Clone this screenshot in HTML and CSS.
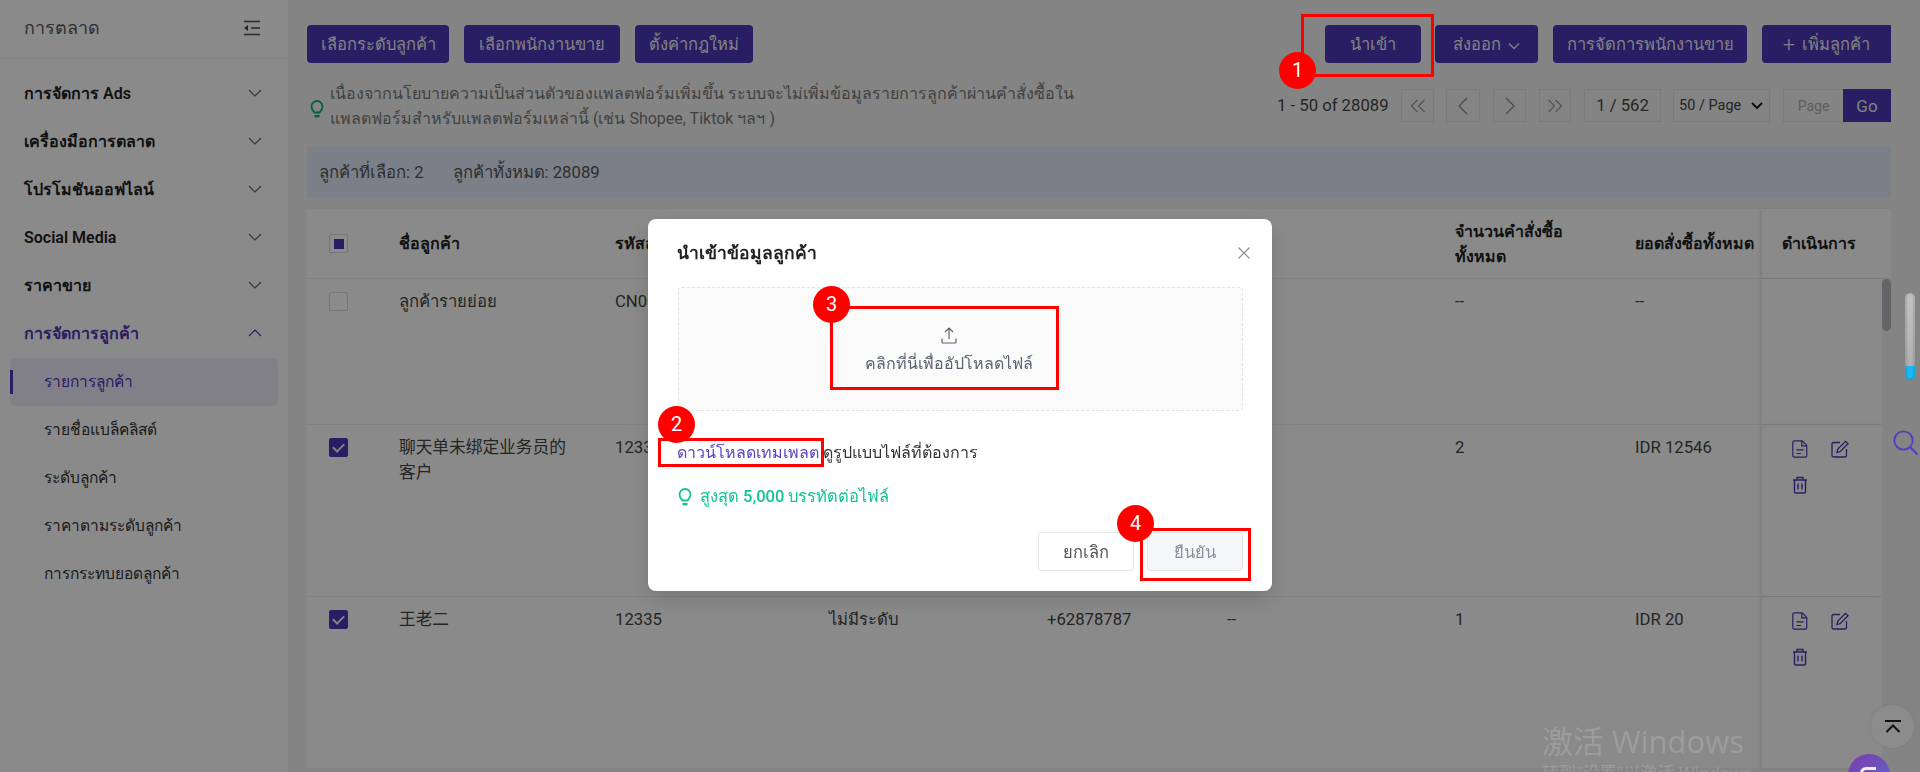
FILE: index.html
```html
<!DOCTYPE html>
<html lang="th">

<head>
  <meta charset="UTF-8" />
  <meta name="viewport" content="width=device-width, initial-scale=1.0" />
  <title>รายการลูกค้า</title>
  <link rel="stylesheet" href="styles.css">
</head>

<body>

  <svg class="sprites" width="0" height="0">
    <symbol id="down" viewBox="0 0 14 8"><path d="M1 1l6 6 6-6" fill="none" stroke="currentColor" stroke-width="1.1" /></symbol>
    <symbol id="up" viewBox="0 0 14 8"><path d="M1 7l6-6 6 6" fill="none" stroke="currentColor" stroke-width="1.1" /></symbol>
    <symbol id="bulb" viewBox="0 0 14 20"><path d="M4.500 13.500C3 12 1.500 10.500 1.500 7.500a5.500 5.500 0 0 1 11 0c0 3-1.500 4.500-3 6z" fill="none" stroke="currentColor" stroke-width="1.800" /><path d="M4.500 16h5v1.500l-1 1h-3l-1-1z" fill="currentColor" /></symbol>
    <symbol id="doc" viewBox="0 0 18 20"><path d="M2.500 1h9l5 5v11.500a1.500 1.500 0 0 1-1.500 1.500H2.500A1.500 1.500 0 0 1 1 17.500v-15A1.500 1.500 0 0 1 2.500 1zM11 1v5.500h5.500M5 11h8M5 15h5" fill="none" stroke="currentColor" stroke-width="1.300" /></symbol>
    <symbol id="edit" viewBox="0 0 18 18"><path d="M9 2.500H2.500A1.500 1.500 0 0 0 1 4v11.500A1.500 1.500 0 0 0 2.500 17H14a1.500 1.500 0 0 0 1.500-1.500V9M6 12.500l.8-3.500L14.500 1.300l2.500 2.500-7.700 7.700z" fill="none" stroke="currentColor" stroke-width="1.300" /></symbol>
    <symbol id="trash" viewBox="0 0 16 18"><path d="M1 4h14M5 4V1.500h6V4M2.500 4v11.500A1.500 1.500 0 0 0 4 17h8a1.500 1.500 0 0 0 1.500-1.500V4M6 7.500v6M10 7.500v6" fill="none" stroke="currentColor" stroke-width="1.400" /></symbol>
  </svg>

  <aside class="sidebar">
    <div class="side-head">
      <span class="side-title">การตลาด</span>
      <svg class="side-toggle" width="18" height="16" viewBox="0 0 18 16">
        <path d="M1 1.500h16M8 8h9M1 14.500h16" fill="none" stroke="#4a4a4a" stroke-width="1.500" />
        <path d="M5 5v6L1 8z" fill="#4a4a4a" />
      </svg>
    </div>
    <nav class="menu">
      <div class="menu-item">การจัดการ Ads <svg class="chev"><use href="#down" /></svg></div>
      <div class="menu-item">เครื่องมือการตลาด <svg class="chev"><use href="#down" /></svg></div>
      <div class="menu-item">โปรโมชันออฟไลน์ <svg class="chev"><use href="#down" /></svg></div>
      <div class="menu-item">Social Media <svg class="chev"><use href="#down" /></svg></div>
      <div class="menu-item">ราคาขาย <svg class="chev"><use href="#down" /></svg></div>
      <div class="menu-item open">การจัดการลูกค้า <svg class="chev"><use href="#up" /></svg></div>
      <div class="sub-item active">รายการลูกค้า</div>
      <div class="sub-item">รายชื่อแบล็คลิสต์</div>
      <div class="sub-item">ระดับลูกค้า</div>
      <div class="sub-item">ราคาตามระดับลูกค้า</div>
      <div class="sub-item">การกระทบยอดลูกค้า</div>
    </nav>
  </aside>

  <main class="main">
    <div class="toolbar">
      <div class="btn-group">
        <button class="btn w-level">เลือกระดับลูกค้า</button>
        <button class="btn w-sales">เลือกพนักงานขาย</button>
        <button class="btn w-rule">ตั้งค่ากฎใหม่</button>
      </div>
      <div class="btn-group">
        <button class="btn w-import">นำเข้า</button>
        <button class="btn w-export">ส่งออก <svg class="btn-chev" viewBox="0 0 12 8"><path d="M1 1.500l5 5 5-5" fill="none" stroke="currentColor" stroke-width="1.400" /></svg></button>
        <button class="btn w-staff">การจัดการพนักงานขาย</button>
        <button class="btn w-add"><span class="plus">+</span> เพิ่มลูกค้า</button>
      </div>
    </div>

    <div class="info-row">
      <div class="note">
        <svg class="note-bulb"><use href="#bulb" /></svg>
        <p>เนื่องจากนโยบายความเป็นส่วนตัวของแพลตฟอร์มเพิ่มขึ้น ระบบจะไม่เพิ่มข้อมูลรายการลูกค้าผ่านคำสั่งซื้อใน<br>แพลตฟอร์มสำหรับแพลตฟอร์มเหล่านี้ (เช่น Shopee, Tiktok ฯลฯ )</p>
      </div>
      <div class="pager">
        <span class="pager-total">1 - 50 of 28089</span>
        <span class="page-btn first"><svg width="16" height="14" viewBox="0 0 16 14"><path d="M7.500 1l-6 6 6 6M14.500 1l-6 6 6 6" fill="none" stroke="currentColor" stroke-width="1.300" /></svg></span>
        <span class="page-btn prev"><svg width="10" height="18" viewBox="0 0 10 18"><path d="M9 1L1 9l8 8" fill="none" stroke="currentColor" stroke-width="1.300" /></svg></span>
        <span class="page-btn next"><svg width="10" height="18" viewBox="0 0 10 18"><path d="M1 1l8 8-8 8" fill="none" stroke="currentColor" stroke-width="1.300" /></svg></span>
        <span class="page-btn last"><svg width="16" height="14" viewBox="0 0 16 14"><path d="M1.500 1l6 6-6 6M8.500 1l6 6-6 6" fill="none" stroke="currentColor" stroke-width="1.300" /></svg></span>
        <span class="page-now">1 / 562</span>
        <span class="page-size">50 / Page <svg width="12" height="8" viewBox="0 0 12 8"><path d="M1 1l5 5 5-5" fill="none" stroke="#111" stroke-width="1.800" /></svg></span>
        <span class="page-input">Page</span>
        <span class="page-go">Go</span>
      </div>
    </div>

    <div class="count-bar">
      <span>ลูกค้าที่เลือก: 2</span>
      <span>ลูกค้าทั้งหมด: 28089</span>
    </div>

    <div class="table">
      <div class="row head">
        <div class="cell"><span class="check part"></span></div>
        <div class="cell">ชื่อลูกค้า</div>
        <div class="cell">รหัสลูกค้า</div>
        <div class="cell">ระดับลูกค้า</div>
        <div class="cell">เบอร์โทรศัพท์</div>
        <div class="cell">อีเมล</div>
        <div class="cell">จำนวนคำสั่งซื้อ<br>ทั้งหมด</div>
        <div class="cell">ยอดสั่งซื้อทั้งหมด</div>
        <div class="cell fixed">ดำเนินการ</div>
      </div>
      <div class="table-body">
        <div class="rows">
          <div class="row first-row">
            <div class="cell"><span class="check"></span></div>
            <div class="cell">ลูกค้ารายย่อย</div>
            <div class="cell">CN0001</div>
            <div class="cell">ไม่มีระดับ</div>
            <div class="cell">--</div>
            <div class="cell">--</div>
            <div class="cell">--</div>
            <div class="cell">--</div>
            <div class="cell fixed"></div>
          </div>
          <div class="row">
            <div class="cell"><span class="check on"></span></div>
            <div class="cell">聊天单未绑定业务员的<br>客户</div>
            <div class="cell">12334</div>
            <div class="cell">ไม่มีระดับ</div>
            <div class="cell">--</div>
            <div class="cell">--</div>
            <div class="cell">2</div>
            <div class="cell">IDR 12546</div>
            <div class="cell fixed">
              <div class="actions">
                <svg class="act"><use href="#doc" /></svg>
                <svg class="act"><use href="#edit" /></svg>
                <svg class="act"><use href="#trash" /></svg>
              </div>
            </div>
          </div>
          <div class="row">
            <div class="cell"><span class="check on"></span></div>
            <div class="cell">王老二</div>
            <div class="cell">12335</div>
            <div class="cell">ไม่มีระดับ</div>
            <div class="cell">+62878787</div>
            <div class="cell">--</div>
            <div class="cell">1</div>
            <div class="cell">IDR 20</div>
            <div class="cell fixed">
              <div class="actions">
                <svg class="act"><use href="#doc" /></svg>
                <svg class="act"><use href="#edit" /></svg>
                <svg class="act"><use href="#trash" /></svg>
              </div>
            </div>
          </div>
        </div>
        <div class="scroll-track"><div class="scroll-thumb"></div></div>
      </div>
    </div>
  </main>

  <div class="to-top">
    <svg width="16" height="13" viewBox="0 0 16 13"><path d="M0 1h16M1.500 12L8 5.500l6.500 6.500" fill="none" stroke="#222" stroke-width="2" /></svg>
  </div>

  <div class="overlay">
    <div class="modal">
      <div class="modal-head">
        <h2>นำเข้าข้อมูลลูกค้า</h2>
        <svg width="12" height="12" viewBox="0 0 12 12"><path d="M.5.500l11 11M11.500.500l-11 11" stroke="#8a8f99" stroke-width="1.200" /></svg>
      </div>
      <div class="upload">
        <svg width="16" height="17" viewBox="0 0 16 17"><path d="M8 12V1.500M4 5l4-4 4 4M1 11.500V15a1 1 0 0 0 1 1h12a1 1 0 0 0 1-1v-3.500" fill="none" stroke="#5c6370" stroke-width="1.200" /></svg>
        <span>คลิกที่นี่เพื่ออัปโหลดไฟล์</span>
      </div>
      <p class="template"><a>ดาวน์โหลดเทมเพลต</a> ดูรูปแบบไฟล์ที่ต้องการ</p>
      <p class="limit"><svg class="limit-bulb"><use href="#bulb" /></svg>สูงสุด 5,000 บรรทัดต่อไฟล์</p>
      <div class="modal-foot">
        <button class="btn-cancel">ยกเลิก</button>
        <button class="btn-ok">ยืนยัน</button>
      </div>
    </div>
  </div>

  <!-- ของลอยด้านขวา -->
  <div class="slider"></div>
  <svg class="float-search" width="26" height="26" viewBox="0 0 26 26">
    <circle cx="10.500" cy="10.500" r="9.200" fill="none" stroke="#523cc4" stroke-width="1.800" />
    <path d="M17.500 17.500l7 7" stroke="#523cc4" stroke-width="1.800" />
  </svg>
  <div class="chat"><span class="chat-c"></span></div>

  <!-- กรอบแดงและหมายเลขขั้นตอน -->
  <div class="mark-box box-1"></div>
  <div class="mark-box box-2"></div>
  <div class="mark-box box-3"></div>
  <div class="mark-box box-4"></div>
  <div class="mark-num num-1">1</div>
  <div class="mark-num num-2">2</div>
  <div class="mark-num num-3">3</div>
  <div class="mark-num num-4">4</div>

  <div class="watermark">
    <div class="wm-big">激活 Windows</div>
    <div class="wm-small">转到"设置"以激活 Windows。</div>
  </div>

</body>

</html>
```

FILE: styles.css
```css
* {
  box-sizing: border-box;
}

html,
body {
  height: 772px;
  overflow: hidden;
}

body {
  margin: 0;
  display: flex;
  position: relative;
  font-family: Roboto, Inter, "Noto Sans", "Noto Sans CJK SC", sans-serif;
  font-size: 16.7px;
  color: #333;
  background: #f1f1f1;
}

.sprites {
  position: absolute;
}

button {
  font-family: inherit;
  border: none;
}

/* sidebar */
.sidebar {
  width: 288px;
  flex: none;
  background: #fbfbfb;
}

.side-head {
  height: 57px;
  padding: 0 27px 2px 24px;
  display: flex;
  align-items: center;
  justify-content: space-between;
  box-shadow: 0 1px 2px rgba(0, 0, 0, 0.06);
}

.side-title {
  font-size: 18px;
  color: #555;
}

.menu {
  padding-top: 13px;
}

.menu-item {
  height: 48px;
  padding: 0 26px 2px 24px;
  display: flex;
  align-items: center;
  justify-content: space-between;
  font-size: 16px;
  font-weight: 600;
  color: #222;
}

.menu-item.open {
  color: #4c35b4;
}

.chev {
  width: 14px;
  height: 8px;
  color: #666;
}

.open .chev {
  color: #4c35b4;
}

.sub-item {
  height: 48px;
  margin: 0 10px;
  padding: 0 0 2px 34px;
  display: flex;
  align-items: center;
  position: relative;
  font-size: 15.5px;
  color: #333;
}

.sub-item.active {
  background: #ece9f8;
  border-radius: 6px;
  color: #4c35b4;
}

.sub-item.active::before {
  content: "";
  position: absolute;
  left: 0;
  top: 12px;
  width: 3px;
  height: 24px;
  background: #4c35b4;
}

/* main */
.main {
  flex: 1;
  padding: 25px 29px 0 19px;
}

.toolbar {
  display: flex;
  justify-content: space-between;
}

.btn-group {
  display: flex;
  gap: 15px;
}

.btn {
  height: 38px;
  padding: 0;
  background: #4c35b4;
  color: #ededed;
  border-radius: 4px;
  font-size: 16.5px;
}

.w-level {
  width: 142px;
}

.w-sales {
  width: 156px;
}

.w-rule {
  width: 118px;
}

.w-import {
  width: 96px;
}

.w-export {
  width: 103px;
  margin-left: -1px;
}

.w-staff {
  width: 194px;
}

.w-add {
  width: 129px;
  border-radius: 4px 0 0 4px;
}

.plus {
  font-size: 21px;
  font-weight: 300;
  line-height: 1;
  margin-right: 3px;
  vertical-align: -1px;
}

.btn-chev {
  width: 12px;
  height: 8px;
  margin-left: 3px;
}

.info-row {
  margin-top: 18px;
  height: 50px;
  display: flex;
  justify-content: space-between;
}

.note {
  display: flex;
  align-items: center;
  gap: 6px;
  padding-left: 3px;
  font-size: 16px;
  line-height: 25px;
  color: #777;
}

.note p {
  margin: 0;
}

.note-bulb {
  width: 14px;
  height: 20px;
  margin-top: 6px;
  color: #0fa77f;
}

.pager {
  height: 33px;
  margin-top: 8px;
  display: flex;
  align-items: center;
  color: #444;
}

.pager-total {
  width: 124px;
}

.page-btn {
  height: 33px;
  display: flex;
  align-items: center;
  justify-content: center;
  border: 1px solid #dedede;
  color: #999;
}

.first {
  width: 33px;
}

.prev {
  width: 34px;
  margin-left: 12px;
  color: #888;
}

.next {
  width: 33px;
  margin-left: 13px;
  color: #888;
}

.last {
  width: 32px;
  margin-left: 13px;
}

.page-now {
  width: 77px;
  height: 33px;
  margin-left: 13px;
  display: flex;
  align-items: center;
  justify-content: center;
  border: 1px solid #dedede;
}

.page-size {
  width: 97px;
  height: 33px;
  margin-left: 12px;
  padding: 0 6px 0 5px;
  display: flex;
  align-items: center;
  justify-content: space-between;
  border: 1px solid #dedede;
  font-size: 14.5px;
}

.page-input {
  width: 60px;
  height: 33px;
  margin-left: 13px;
  display: flex;
  align-items: center;
  justify-content: center;
  border: 1px solid #dedede;
  border-right: none;
  font-size: 14px;
  color: #aaa;
}

.page-go {
  width: 48px;
  height: 33px;
  display: flex;
  align-items: center;
  justify-content: center;
  background: #4c35b4;
  color: #ededed;
  font-size: 17px;
}

.count-bar {
  margin-top: 16px;
  height: 50px;
  padding-left: 12px;
  display: flex;
  align-items: center;
  gap: 29px;
  background: #e1e8f6;
  color: #555;
}

/* table */
.table {
  margin-top: 12px;
}

.row {
  display: grid;
  grid-template-columns: 92px 216px 214px 218px 180px 228px 180px 127px 120px;
  height: 172px;
  background: #fbfbfb;
  border-top: 1px solid #ececec;
  line-height: 25px;
  color: #444;
}

.first-row {
  height: 145px;
  border-top: none;
}

.head {
  height: 70px;
  border-top: none;
  border-bottom: 1px solid #ececec;
  grid-template-columns: 92px 216px 214px 218px 180px 228px 180px 127px 129px;
  font-size: 16px;
  font-weight: 600;
  color: #222;
}

.head .cell {
  padding-top: 0;
  display: flex;
  align-items: center;
}

.cell {
  padding: 10px 0 0 0;
  white-space: nowrap;
}

.cell:first-child {
  padding: 13px 0 0 22px;
}

.head .cell:first-child {
  padding: 0 0 0 22px;
}

.fixed {
  box-shadow: -2px 0 3px rgba(0, 0, 0, 0.1);
  padding-left: 20px;
}

.head .fixed {
  padding-left: 20px;
}

.check {
  display: flex;
  align-items: center;
  justify-content: center;
  width: 19px;
  height: 19px;
  border: 1px solid #d8d8d8;
  border-radius: 2px;
  background: #fdfdfd;
}

.check.part::after {
  content: "";
  width: 10px;
  height: 10px;
  background: #4c35b4;
}

.check.on {
  background: #4c35b4;
  border-color: #4c35b4;
}

.check.on::after {
  content: "";
  width: 9px;
  height: 5px;
  margin-top: -3px;
  border-left: 2px solid #eee;
  border-bottom: 2px solid #eee;
  transform: rotate(-45deg);
}

.actions {
  display: grid;
  grid-template-columns: 40px 40px;
  grid-auto-rows: 36px;
  margin: 5px 0 0 9px;
  color: #4c35b4;
}

.act {
  width: 18px;
  height: 18px;
}

.table-body {
  display: flex;
}

.rows {
  width: 1575px;
}

.scroll-track {
  width: 9px;
}

.scroll-thumb {
  width: 9px;
  height: 52px;
  border-radius: 5px;
  background: #b4b8c0;
}

/* floating */
.to-top {
  position: absolute;
  left: 1871px;
  top: 705px;
  width: 43px;
  height: 43px;
  border-radius: 50%;
  background: #fff;
  display: flex;
  align-items: center;
  justify-content: center;
  box-shadow: 0 0 4px rgba(0, 0, 0, 0.08);
}

.slider {
  position: absolute;
  z-index: 15;
  left: 1905px;
  top: 293px;
  width: 10px;
  height: 87px;
  border-radius: 5px;
  background: linear-gradient(#c4c4c4 0, #b0b0b0 84%, #1ab9f5 84%);
  box-shadow: inset 2px 0 2px rgba(0, 0, 0, 0.12), inset -2px 0 2px rgba(0, 0, 0, 0.12);
}

.float-search {
  position: absolute;
  z-index: 15;
  left: 1893px;
  top: 430px;
}

.chat {
  position: absolute;
  z-index: 15;
  left: 1848px;
  top: 754px;
  width: 42px;
  height: 42px;
  border-radius: 50%;
  background: linear-gradient(135deg, #7c3aad, #5b6ccb);
}

.chat-c {
  position: absolute;
  left: 12px;
  top: 13px;
  width: 16px;
  height: 16px;
  border: 3px solid #eee;
  border-right: none;
  border-radius: 6px 0 0 6px;
}

/* modal */
.overlay {
  position: fixed;
  inset: 0;
  z-index: 10;
  padding-top: 219px;
  display: flex;
  justify-content: center;
  align-items: flex-start;
  background: rgba(0, 0, 0, 0.45);
}

.modal {
  width: 624px;
  height: 372px;
  padding: 0 29px 0 29px;
  background: #fff;
  border-radius: 8px;
  box-shadow: 0 8px 24px rgba(0, 0, 0, 0.15);
}

.modal-head {
  height: 68px;
  margin-right: -7px;
  display: flex;
  align-items: center;
  justify-content: space-between;
}

.modal-head h2 {
  margin: 0;
  font-size: 17.500px;
  font-weight: 600;
  color: #222;
}

.upload {
  height: 124px;
  margin-left: 1px;
  display: flex;
  flex-direction: column;
  align-items: center;
  padding: 39px 24px 0 0;
  gap: 7px;
  background: #fafafa;
  border: 1px dashed #e4e4e4;
  border-radius: 4px;
  font-size: 16px;
  color: #5c6370;
}

.template {
  margin: 29px 0 0;
  line-height: 25px;
  font-size: 16px;
  color: #333;
}

.template a {
  color: #5a43c8;
}

.limit {
  margin: 19px 0 0 1px;
  display: flex;
  align-items: center;
  gap: 8px;
  line-height: 25px;
  font-size: 16.5px;
  font-weight: 500;
  color: #12c493;
}

.limit-bulb {
  width: 14px;
  height: 20px;
}

.modal-foot {
  margin-top: 23px;
  display: flex;
  justify-content: flex-end;
  gap: 13px;
}

.btn-cancel,
.btn-ok {
  width: 96px;
  height: 39px;
  border-radius: 3px;
  font-size: 16.500px;
}

.btn-cancel {
  background: #fff;
  border: 1px solid #e5e7eb;
  color: #555;
}

.btn-ok {
  background: #f5f6f8;
  border: 1px solid #e5e7eb;
  color: #8a8f99;
}

/* annotations */
.mark-box {
  position: absolute;
  z-index: 20;
  border: 3px solid #ff0000;
}

.box-1 {
  left: 1301px;
  top: 14px;
  width: 133px;
  height: 63px;
}

.box-2 {
  left: 658px;
  top: 438px;
  width: 166px;
  height: 29px;
}

.box-3 {
  left: 830px;
  top: 306px;
  width: 229px;
  height: 84px;
}

.box-4 {
  left: 1140px;
  top: 528px;
  width: 111px;
  height: 53px;
}

.mark-num {
  position: absolute;
  z-index: 21;
  width: 37px;
  height: 37px;
  border-radius: 50%;
  background: #ff0000;
  color: #fff;
  font-size: 20px;
  line-height: 37px;
  text-align: center;
}

.num-1 {
  left: 1279px;
  top: 52px;
}

.num-2 {
  left: 658px;
  top: 406px;
}

.num-3 {
  left: 813px;
  top: 286px;
}

.num-4 {
  left: 1117px;
  top: 505px;
}

.watermark {
  position: absolute;
  z-index: 22;
  left: 1542px;
  top: 720px;
  color: rgba(255, 255, 255, 0.16);
  font-family: "Open Sans", "Noto Sans CJK SC", sans-serif;
  white-space: nowrap;
}

.wm-big {
  font-size: 31px;
  line-height: 42px;
}

.wm-small {
  font-size: 17px;
  line-height: 22px;
}
```
